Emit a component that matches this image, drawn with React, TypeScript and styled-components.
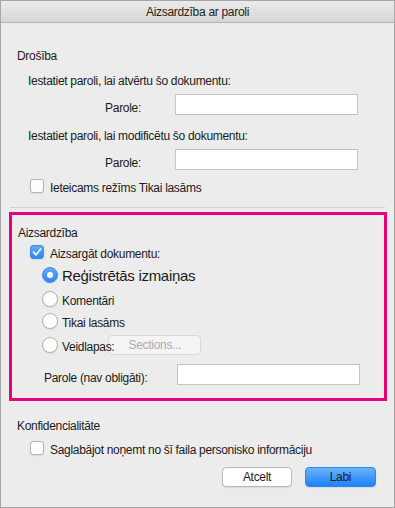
import styled, { createGlobalStyle } from 'styled-components';

const GlobalStyle = createGlobalStyle`
    html, body {
        margin: 0;
        padding: 0;
        background: #ececec;
    }
    body {
        font-family: 'Liberation Sans', Arial, sans-serif;
        font-size: 12px;
        letter-spacing: -0.3px;
        color: #1b1b1b;
    }
`;

const Window = styled.div`
    width: 395px;
    height: 508px;
    box-sizing: border-box;
    border: 1px solid #a6a6a6;
    background: #ececec;
    display: flex;
    flex-direction: column;
`;

const TitleBar = styled.div`
    height: 21px;
    flex: none;
    border-bottom: 1px solid #b2b2b2;
    background: linear-gradient(#ebebeb, #d6d6d6);
    display: flex;
    align-items: center;
    justify-content: center;
    font-size: 12px;
    color: #222;
`;

const Body = styled.div`
    padding: 25px 0 0 0;
    display: flex;
    flex-direction: column;
`;

const Heading = styled.div<{ $top?: number; $left?: number }>`
    height: 16px;
    line-height: 16px;
    margin-top: ${(p) => p.$top ?? 0}px;
    padding-left: ${(p) => p.$left ?? 16}px;
`;

const Hint = styled.div<{ $top: number }>`
    height: 16px;
    line-height: 16px;
    margin-top: ${(p) => p.$top}px;
    padding-left: 27px;
`;

const FieldRow = styled.div<{ $top: number; $labelWidth: number; $left?: number; $gap?: number }>`
    display: grid;
    grid-template-columns: ${(p) => p.$labelWidth}px 183px;
    column-gap: ${(p) => p.$gap ?? 34}px;
    margin-top: ${(p) => p.$top}px;
    padding-left: ${(p) => p.$left ?? 0}px;
    height: 21px;
`;

const FieldLabel = styled.label<{ $align?: string }>`
    text-align: ${(p) => p.$align ?? 'right'};
    padding-top: 6px;
    line-height: 16px;
    white-space: nowrap;
`;

const TextInput = styled.input`
    box-sizing: border-box;
    width: 183px;
    height: 21px;
    margin: 0;
    border: 1px solid #c4c4c4;
    background: #fff;
    outline: none;
`;

const CheckRow = styled.div<{ $top: number; $left: number }>`
    display: flex;
    align-items: center;
    gap: 6px;
    height: 14px;
    margin-top: ${(p) => p.$top}px;
    padding-left: ${(p) => p.$left}px;
`;

const CheckBox = styled.span<{ $checked?: boolean }>`
    box-sizing: border-box;
    width: 14px;
    height: 14px;
    flex: none;
    border-radius: 3px;
    border: 1px solid ${(p) => (p.$checked ? '#3a8cef' : '#b3b3b3')};
    background: ${(p) => (p.$checked ? 'linear-gradient(#62a9fb, #2f85ef)' : '#fff')};
    box-shadow: 0 1px 1px rgba(0, 0, 0, 0.08);
    display: flex;
    align-items: center;
    justify-content: center;
`;

const CheckText = styled.span`
    line-height: 16px;
    padding-top: 4px;
    white-space: nowrap;
`;

const Separator = styled.div`
    height: 1px;
    margin: 14px 9px 0 9px;
    background: #d2d2d2;
`;

const ProtectionBox = styled.div`
    box-sizing: border-box;
    margin: 4px 7px 0 8px;
    border: 3px solid #e6007e;
    height: 189px;
    display: flex;
    flex-direction: column;
    padding-top: 10px;
`;

const RadioRow = styled.div<{ $top: number }>`
    display: flex;
    align-items: center;
    gap: 4px;
    height: 16px;
    margin-top: ${(p) => p.$top}px;
    padding-left: 30px;
`;

const Radio = styled.span<{ $checked?: boolean }>`
    box-sizing: border-box;
    width: 16px;
    height: 16px;
    flex: none;
    border-radius: 50%;
    border: 1px solid ${(p) => (p.$checked ? '#3a8cef' : '#b0b0b0')};
    background: ${(p) => (p.$checked ? 'linear-gradient(#62a9fb, #2f85ef)' : '#fff')};
    box-shadow: 0 1px 1px rgba(0, 0, 0, 0.08);
    display: flex;
    align-items: center;
    justify-content: center;

    &::after {
        content: '';
        display: ${(p) => (p.$checked ? 'block' : 'none')};
        width: 6px;
        height: 6px;
        border-radius: 50%;
        background: #fff;
    }
`;

const RadioText = styled.span<{ $large?: boolean }>`
    position: relative;
    z-index: 1;
    font-size: ${(p) => (p.$large ? '15px' : '12px')};
    line-height: 16px;
    padding-top: ${(p) => (p.$large ? 1 : 3)}px;
    white-space: nowrap;
`;

const SectionsButton = styled.button`
    margin-left: -10px;
    height: 20px;
    width: 93px;
    box-sizing: border-box;
    border: 1px solid #d8d8d8;
    border-radius: 4px;
    background: #f4f4f4;
    color: #ababab;
    font-family: inherit;
    font-size: 12px;
    letter-spacing: inherit;
    padding: 0;
`;

const ButtonBar = styled.div`
    display: flex;
    justify-content: flex-end;
    gap: 13px;
    margin-top: 12px;
    padding-right: 18px;
`;

const Button = styled.button<{ $primary?: boolean }>`
    box-sizing: border-box;
    width: ${(p) => (p.$primary ? 71 : 70)}px;
    height: 20px;
    padding: 0;
    border-radius: 4px;
    font-family: inherit;
    font-size: 12px;
    letter-spacing: inherit;
    color: #1b1b1b;
    border: 1px solid ${(p) => (p.$primary ? '#2b86f5' : '#b9b9b9')};
    background: ${(p) => (p.$primary ? 'linear-gradient(#6ab2fb, #1d82fb)' : '#fff')};
    box-shadow: 0 1px 1px rgba(0, 0, 0, 0.08);
`;

const Check = () => (
    <svg width="10" height="10" viewBox="0 0 10 10">
        <path d="M1.5 5.2 L4 7.8 L8.6 2" fill="none" stroke="#fff" strokeWidth="1.7" strokeLinecap="round" strokeLinejoin="round" />
    </svg>
);

export default function App() {
    return (
        <>
            <GlobalStyle />
            <Window>
                <TitleBar>Aizsardzība ar paroli</TitleBar>
                <Body>
                    <Heading>Drošība</Heading>
                    <Hint $top={9}>Iestatiet paroli, lai atvērtu šo dokumentu:</Hint>
                    <FieldRow $top={5} $labelWidth={140}>
                        <FieldLabel>Parole:</FieldLabel>
                        <TextInput />
                    </FieldRow>
                    <Hint $top={13}>Iestatiet paroli, lai modificētu šo dokumentu:</Hint>
                    <FieldRow $top={5} $labelWidth={140}>
                        <FieldLabel>Parole:</FieldLabel>
                        <TextInput />
                    </FieldRow>
                    <CheckRow $top={9} $left={29}>
                        <CheckBox />
                        <CheckText>Ieteicams režīms Tikai lasāms</CheckText>
                    </CheckRow>
                    <Separator />

                    <ProtectionBox>
                        <Heading $left={6}>Aizsardzība</Heading>
                        <CheckRow $top={4} $left={18}>
                            <CheckBox $checked>
                                <Check />
                            </CheckBox>
                            <CheckText>Aizsargāt dokumentu:</CheckText>
                        </CheckRow>
                        <RadioRow $top={8}>
                            <Radio $checked />
                            <RadioText $large>Reģistrētās izmaiņas</RadioText>
                        </RadioRow>
                        <RadioRow $top={8}>
                            <Radio />
                            <RadioText>Komentāri</RadioText>
                        </RadioRow>
                        <RadioRow $top={6}>
                            <Radio />
                            <RadioText>Tikai lasāms</RadioText>
                        </RadioRow>
                        <RadioRow $top={8}>
                            <Radio />
                            <RadioText>Veidlapas:</RadioText>
                            <SectionsButton disabled>Sections...</SectionsButton>
                        </RadioRow>
                        <FieldRow $top={11} $labelWidth={130} $left={32} $gap={3}>
                            <FieldLabel $align="left">Parole (nav obligāti):</FieldLabel>
                            <TextInput />
                        </FieldRow>
                    </ProtectionBox>

                    <Heading $top={17}>Konfidencialitāte</Heading>
                    <CheckRow $top={7} $left={29}>
                        <CheckBox />
                        <CheckText>Saglabājot noņemt no šī faila personisko informāciju</CheckText>
                    </CheckRow>
                    <ButtonBar>
                        <Button>Atcelt</Button>
                        <Button $primary>Labi</Button>
                    </ButtonBar>
                </Body>
            </Window>
        </>
    );
}
